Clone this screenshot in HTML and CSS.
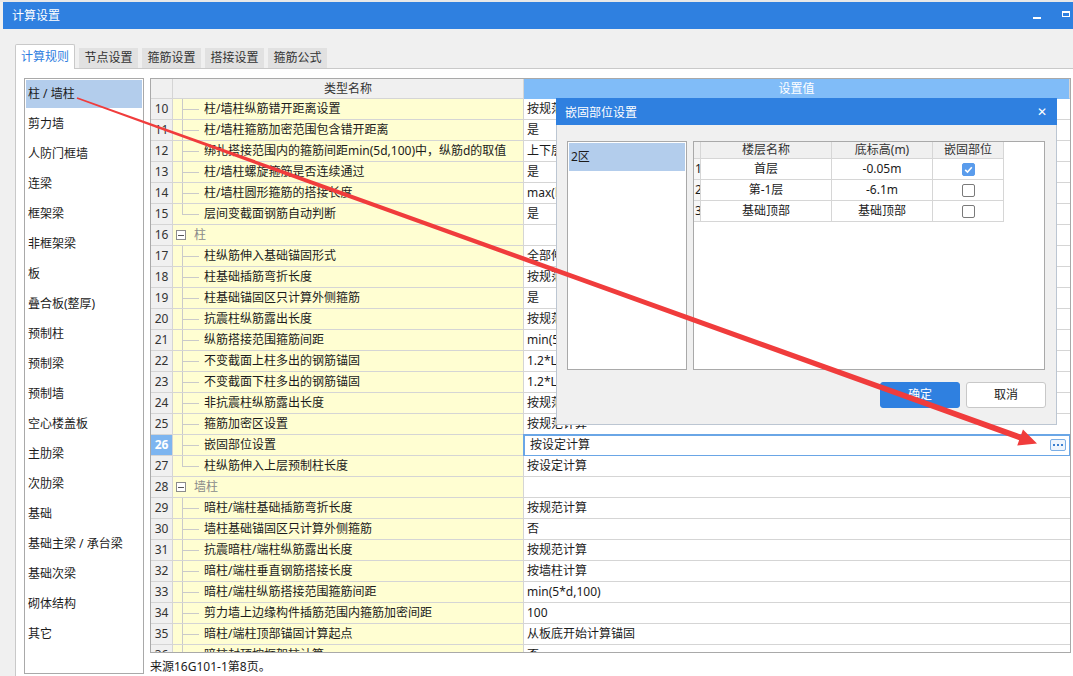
FILE: index.html
```html
<!DOCTYPE html>
<html lang="zh-CN">
<head>
<meta charset="utf-8">
<title>计算设置</title>
<link rel="stylesheet" href="styles.css">
</head>
<body>
<div class="topstrip"></div>
<div class="window">
  <div class="titlebar">
    <span class="title">计算设置</span>
    <span class="wb-min"></span>
    <span class="wb-max"></span>
  </div>
  <div class="tabs">
    <div class="tab active">计算规则</div>
    <div class="tab">节点设置</div>
    <div class="tab">箍筋设置</div>
    <div class="tab">搭接设置</div>
    <div class="tab">箍筋公式</div>
  </div>
  <div class="panel">
    <div class="catlist">
      <div class="cat sel">柱 / 墙柱</div>
      <div class="cat">剪力墙</div>
      <div class="cat">人防门框墙</div>
      <div class="cat">连梁</div>
      <div class="cat">框架梁</div>
      <div class="cat">非框架梁</div>
      <div class="cat">板</div>
      <div class="cat">叠合板(整厚)</div>
      <div class="cat">预制柱</div>
      <div class="cat">预制梁</div>
      <div class="cat">预制墙</div>
      <div class="cat">空心楼盖板</div>
      <div class="cat">主肋梁</div>
      <div class="cat">次肋梁</div>
      <div class="cat">基础</div>
      <div class="cat">基础主梁 / 承台梁</div>
      <div class="cat">基础次梁</div>
      <div class="cat">砌体结构</div>
      <div class="cat">其它</div>
    </div>
    <div class="gridwrap">
      <div class="grid">
        <div class="row hdr">
          <div class="c num"></div>
          <div class="c hname">类型名称</div>
          <div class="c hval">设置值</div>
        </div>
        <div class="row"><div class="c num">10</div><div class="c nm">柱/墙柱纵筋错开距离设置</div><div class="c val">按规范计算</div></div>
        <div class="row"><div class="c num">11</div><div class="c nm">柱/墙柱箍筋加密范围包含错开距离</div><div class="c val">是</div></div>
        <div class="row"><div class="c num">12</div><div class="c nm">绑扎搭接范围内的箍筋间距min(5d,100)中，纵筋d的取值</div><div class="c val">上下层纵筋最小直径</div></div>
        <div class="row"><div class="c num">13</div><div class="c nm">柱/墙柱螺旋箍筋是否连续通过</div><div class="c val">是</div></div>
        <div class="row"><div class="c num">14</div><div class="c nm">柱/墙柱圆形箍筋的搭接长度</div><div class="c val">max(lae,300)</div></div>
        <div class="row"><div class="c num">15</div><div class="c nm end">层间变截面钢筋自动判断</div><div class="c val">是</div></div>
        <div class="row"><div class="c num">16</div><div class="c nm grp"><span class="minus"></span>柱</div><div class="c val"></div></div>
        <div class="row"><div class="c num">17</div><div class="c nm">柱纵筋伸入基础锚固形式</div><div class="c val">全部伸入基底弯折</div></div>
        <div class="row"><div class="c num">18</div><div class="c nm">柱基础插筋弯折长度</div><div class="c val">按规范计算</div></div>
        <div class="row"><div class="c num">19</div><div class="c nm">柱基础锚固区只计算外侧箍筋</div><div class="c val">是</div></div>
        <div class="row"><div class="c num">20</div><div class="c nm">抗震柱纵筋露出长度</div><div class="c val">按规范计算</div></div>
        <div class="row"><div class="c num">21</div><div class="c nm">纵筋搭接范围箍筋间距</div><div class="c val">min(5*d,100)</div></div>
        <div class="row"><div class="c num">22</div><div class="c nm">不变截面上柱多出的钢筋锚固</div><div class="c val">1.2*Lae</div></div>
        <div class="row"><div class="c num">23</div><div class="c nm">不变截面下柱多出的钢筋锚固</div><div class="c val">1.2*Lae</div></div>
        <div class="row"><div class="c num">24</div><div class="c nm">非抗震柱纵筋露出长度</div><div class="c val">按规范计算</div></div>
        <div class="row"><div class="c num">25</div><div class="c nm">箍筋加密区设置</div><div class="c val">按规范计算</div></div>
        <div class="row"><div class="c num cur">26</div><div class="c nm">嵌固部位设置</div><div class="c val edit"><span>按设定计算</span><span class="more"><i></i><i></i><i></i></span></div></div>
        <div class="row"><div class="c num">27</div><div class="c nm end">柱纵筋伸入上层预制柱长度</div><div class="c val">按设定计算</div></div>
        <div class="row"><div class="c num">28</div><div class="c nm grp"><span class="minus"></span>墙柱</div><div class="c val"></div></div>
        <div class="row"><div class="c num">29</div><div class="c nm">暗柱/端柱基础插筋弯折长度</div><div class="c val">按规范计算</div></div>
        <div class="row"><div class="c num">30</div><div class="c nm">墙柱基础锚固区只计算外侧箍筋</div><div class="c val">否</div></div>
        <div class="row"><div class="c num">31</div><div class="c nm">抗震暗柱/端柱纵筋露出长度</div><div class="c val">按规范计算</div></div>
        <div class="row"><div class="c num">32</div><div class="c nm">暗柱/端柱垂直钢筋搭接长度</div><div class="c val">按墙柱计算</div></div>
        <div class="row"><div class="c num">33</div><div class="c nm">暗柱/端柱纵筋搭接范围箍筋间距</div><div class="c val">min(5*d,100)</div></div>
        <div class="row"><div class="c num">34</div><div class="c nm">剪力墙上边缘构件插筋范围内箍筋加密间距</div><div class="c val">100</div></div>
        <div class="row"><div class="c num">35</div><div class="c nm">暗柱/端柱顶部锚固计算起点</div><div class="c val">从板底开始计算锚固</div></div>
        <div class="row"><div class="c num">36</div><div class="c nm">暗柱封顶按框架柱计算</div><div class="c val">否</div></div>
      </div>
      <div class="status">来源16G101-1第8页。</div>
    </div>
  </div>
</div>

<div class="dialog">
  <div class="dlg-title"><span>嵌固部位设置</span><span class="dlg-x">✕</span></div>
  <div class="dlg-body">
    <div class="dlg-boxes">
      <div class="dlg-left"><div class="zone sel">2区</div></div>
      <div class="dlg-right">
        <div class="dt-row dt-hdr"><div class="d"></div><div class="d">楼层名称</div><div class="d">底标高(m)</div><div class="d">嵌固部位</div></div>
        <div class="dt-row"><div class="d rn">1</div><div class="d">首层</div><div class="d">-0.05m</div><div class="d"><span class="cb on"><svg viewBox="0 0 13 13" width="13" height="13"><path d="M3.2 6.8 L5.5 9 L9.8 4.3" fill="none" stroke="#fff" stroke-width="1.6"/></svg></span></div></div>
        <div class="dt-row"><div class="d rn">2</div><div class="d">第-1层</div><div class="d">-6.1m</div><div class="d"><span class="cb"></span></div></div>
        <div class="dt-row"><div class="d rn">3</div><div class="d">基础顶部</div><div class="d">基础顶部</div><div class="d"><span class="cb"></span></div></div>
      </div>
    </div>
    <div class="dlg-btns">
      <div class="btn primary">确定</div>
      <div class="btn plain">取消</div>
    </div>
  </div>
</div>

<svg class="arrow" width="1073" height="676" viewBox="0 0 1073 676">
  <polygon fill="#f03c3c" points="76.73,98.75 312.13,184.73 1019.12,440.13 1017.23,445.4 1037,443.5 1022.97,429.4 1021.08,434.67 313.47,180.97 77.27,97.25"/>
</svg>
</body>
</html>
```
FILE: styles.css
```css
* { box-sizing: border-box; }
html, body { margin: 0; padding: 0; }
body {
  width: 1073px;
  height: 676px;
  overflow: hidden;
  position: relative;
  background: #f0f0f0;
  font-family: "Noto Sans", "Noto Sans CJK SC", sans-serif;
  font-size: 12px;
  color: #1b1b1b;
}
.topstrip { height: 2px; background: #e8e8e8; }
.window { margin-left: 3px; }

.titlebar {
  height: 27px;
  background: #2f80e0;
  color: #fff;
  display: flex;
  align-items: center;
  padding-left: 9px;
}
.title { flex: 1; line-height: 27px; }
.wb-min { width: 8px; height: 2px; background: #fff; margin-top: 5px; }
.wb-max {
  width: 8px; height: 6px;
  border: 1px solid #fff; border-top-width: 2px;
  margin-left: 21px; margin-right: 3px; margin-top: -3px;
}

.tabs {
  height: 39px;
  display: flex;
  align-items: flex-end;
  padding-left: 12px;
}
.tab {
  width: 59px;
  height: 20px;
  margin-right: 4px;
  background: #e1e1e1;
  color: #333;
  text-align: center;
  line-height: 20px;
}
.tab.active {
  width: 60px;
  height: 25px;
  margin-bottom: -1px;
  background: #fff;
  border: 1px solid #c9c9c9;
  border-bottom: none;
  border-radius: 2px 2px 0 0;
  color: #2f80e0;
  line-height: 24px;
  position: relative;
  z-index: 1;
}

.panel {
  margin-left: 12px;
  height: 608px;
  background: #fff;
  border-top: 1px solid #c9c9c9;
  border-left: 1px solid #c9c9c9;
  display: flex;
  padding: 9px 0 0 8px;
}
.catlist {
  width: 120px;
  height: 596px;
  border: 1px solid #a9a9a9;
  padding: 1px;
  flex: none;
}
.cat {
  height: 28px;
  margin-bottom: 2px;
  line-height: 28px;
  padding-left: 2px;
  white-space: nowrap;
}
.cat.sel { background: #b3cdec; }

.gridwrap { margin-left: 6px; width: 921px; flex: none; }
.grid {
  border: 1px solid #a9a9a9;
  height: 575px;
  overflow: hidden;
}
.row {
  display: grid;
  grid-template-columns: 22px 351px 1fr;
  height: 21px;
}
.c {
  border-right: 1px solid #d5d5d5;
  border-bottom: 1px solid #d5d5d5;
  line-height: 20px;
  white-space: nowrap;
  overflow: hidden;
}
.row .val { border-right: none; background: #fff; padding-left: 3px; }
.num {
  background: #f0f0f0;
  text-align: center;
  color: #333;
}
.num.cur { background: #7db5f0; color: #fff; font-weight: bold; }
.hdr { height: 20px; }
.hdr .c { line-height: 19px; }
.hname { background: #f0f0f0; text-align: center; color: #333; }
.row .hval { background: #80bcf8; color: #fff; text-align: center; padding-left: 0; border-bottom-color: #80bcf8; }

.nm {
  padding-left: 31px;
  background:
    linear-gradient(#cacaca, #cacaca) 9px 0 / 1px 100% no-repeat,
    linear-gradient(#cacaca, #cacaca) 10px 10px / 16px 1px no-repeat,
    #fffed2;
}
.nm.end {
  background:
    linear-gradient(#cacaca, #cacaca) 9px 0 / 1px 11px no-repeat,
    linear-gradient(#cacaca, #cacaca) 10px 10px / 16px 1px no-repeat,
    #fffed2;
}
.nm.grp {
  background: #fffed2;
  padding-left: 3px;
  display: flex;
  align-items: center;
  color: #8a8a8a;
}
.minus {
  width: 10px; height: 10px;
  border: 1px solid #8c8c8c;
  margin-right: 8px;
  background: linear-gradient(#555, #555) center / 6px 1px no-repeat, #fff;
}
.row .val.edit {
  display: flex;
  align-items: center;
  justify-content: space-between;
  padding-left: 6px;
  padding-right: 4px;
  outline: 2px solid #6aa6e6;
  outline-offset: -1px;
}
.more {
  width: 16px; height: 12px;
  border: 1px solid #7aaee6;
  border-radius: 2px;
  background: #eef5fd;
  display: flex;
  align-items: center;
  justify-content: center;
  gap: 2px;
}
.more i { width: 2px; height: 2px; background: #3a7fd0; display: block; }

.status { margin-top: 6px; line-height: 16px; }

.dialog {
  position: absolute;
  left: 556px;
  top: 98px;
  width: 501px;
  height: 327px;
  background: #f0f0f0;
  border: 1px solid #bcc6d2;
  border-top: none;
}
.dlg-title {
  height: 27px;
  margin: 0 -1px;
  background: #2f80e0;
  color: #fff;
  display: flex;
  align-items: center;
  justify-content: space-between;
  padding: 0 9px 0 9px;
}
.dlg-x { font-size: 12px; margin-right: 1px; }
.dlg-body { padding: 16px 10px 0 10px; }
.dlg-boxes { display: flex; gap: 6px; height: 229px; }
.dlg-left {
  width: 120px;
  border: 1px solid #a9a9a9;
  background: #fff;
  padding: 1px;
}
.zone { height: 28px; line-height: 28px; padding-left: 2px; }
.zone.sel { background: #b3cdec; }
.dlg-right {
  width: 352px;
  border: 1px solid #a9a9a9;
  background: #fff;
}
.dt-row {
  display: grid;
  grid-template-columns: 7px 131px 101px 71px;
  height: 21px;
}
.d {
  border-right: 1px solid #d6d6d6;
  border-bottom: 1px solid #d6d6d6;
  text-align: center;
  line-height: 20px;
  white-space: nowrap;
  overflow: hidden;
  display: flex;
  align-items: center;
  justify-content: center;
}
.dt-hdr { height: 17px; }
.dt-hdr .d { background: #f0f0f0; color: #333; line-height: 16px; }
.d.rn { justify-content: flex-start; padding-left: 1px; background: #f7f7f7; }
.cb {
  width: 13px; height: 13px;
  border: 1px solid #7a7a7a;
  border-radius: 2px;
  background: #fff;
  display: block;
}
.cb.on { background: #5a9cec; border-color: #5a9cec; }
.cb svg { display: block; margin: -1px; }

.dlg-btns {
  display: flex;
  justify-content: flex-end;
  gap: 6px;
  margin-top: 12px;
}
.btn {
  width: 80px;
  height: 26px;
  border-radius: 3px;
  line-height: 24px;
  text-align: center;
}
.btn.primary { background: #2f80e0; border: 1px solid #2f80e0; color: #fff; }
.btn.plain { background: #fff; border: 1px solid #c8c8c8; color: #1b1b1b; }

.arrow {
  position: absolute;
  left: 0;
  top: 0;
  pointer-events: none;
}
```
